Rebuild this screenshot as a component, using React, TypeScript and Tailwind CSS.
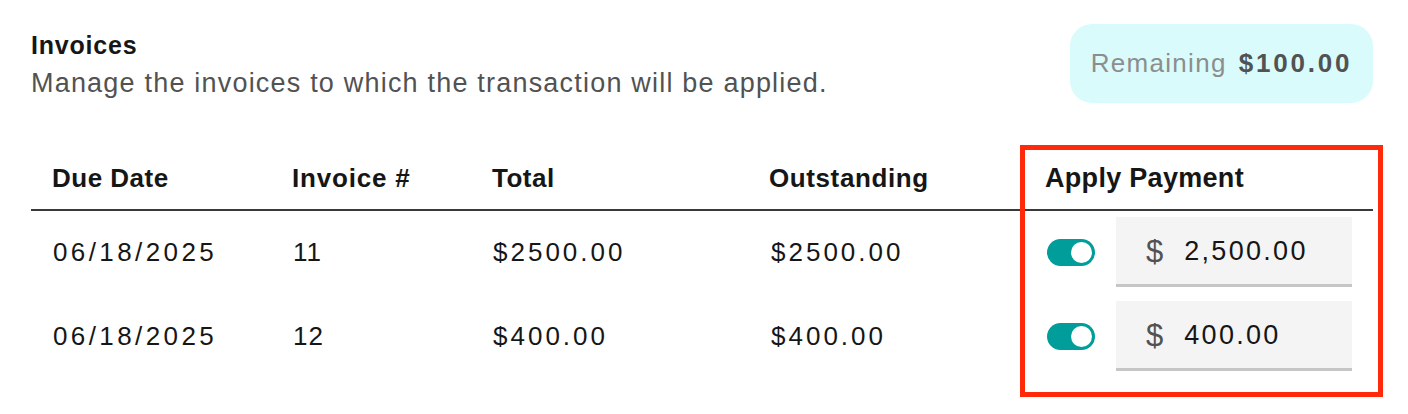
const font = { fontFamily: '"Liberation Sans", Arial, sans-serif' };

interface Invoice {
  dueDate: string;
  number: string;
  total: string;
  outstanding: string;
  applied: string;
}

const invoices: Invoice[] = [
  { dueDate: '06/18/2025', number: '11', total: '$2500.00', outstanding: '$2500.00', applied: '2,500.00' },
  { dueDate: '06/18/2025', number: '12', total: '$400.00', outstanding: '$400.00', applied: '400.00' },
];

function Toggle() {
  return (
    <div className="relative w-[48px] h-[27px] shrink-0 rounded-full bg-[#009d9a]">
      <div className="absolute right-[3px] top-[3px] w-[21px] h-[21px] rounded-full bg-white" />
    </div>
  );
}

function AmountInput({ value }: { value: string }) {
  return (
    <div className="flex items-center w-[236px] h-[70px] bg-[#f4f4f4] border-b-[3px] border-[#c6c6c6] pl-[30px]">
      <span className="text-[31px] leading-none text-[#525252] pt-[2px]">$</span>
      <span className="ml-[21px] text-[27px] leading-none tracking-[2.3px] text-[#161616] pt-[2px]">{value}</span>
    </div>
  );
}

const cols = 'grid grid-cols-[240px_200px_277px_276px_1fr]';

export default function App() {
  return (
    <div className="relative w-[1408px] h-[414px] bg-white overflow-hidden" style={font}>
      <div className="ml-[31px] w-[1342px] pt-[24px]">
        <div className="flex items-start justify-between">
          <div className="pt-[9px]">
            <h2 className="text-[25px] leading-[25px] font-bold tracking-[0.8px] text-[#161616]">Invoices</h2>
            <p className="mt-[12px] text-[27px] leading-[27px] tracking-[1.2px] text-[#525252]">
              Manage the invoices to which the transaction will be applied.
            </p>
          </div>
          <div className="flex items-center justify-center gap-[12px] w-[303px] h-[79px] rounded-[22px] bg-[#d9fbfb]">
            <span className="text-[26px] tracking-[1.3px] text-[#8d8d8d]">Remaining</span>
            <span className="text-[26px] font-bold tracking-[2.8px] text-[#525252]">$100.00</span>
          </div>
        </div>

        <div className={`${cols} items-end pt-[62px] pb-[18px] border-b-2 border-[#393939] text-[#161616] font-bold`}>
          <div className="pl-[21px] text-[26px] leading-[26px] tracking-[0.5px]">Due Date</div>
          <div className="pl-[21px] text-[26px] leading-[26px] tracking-[0.8px]">Invoice #</div>
          <div className="pl-[21px] text-[26px] leading-[26px] tracking-[0.5px]">Total</div>
          <div className="pl-[21px] text-[26px] leading-[26px] tracking-[0.6px]">Outstanding</div>
          <div className="pl-[21px] text-[27px] leading-[26px] tracking-[0.3px]">Apply Payment</div>
        </div>

        <div className="flex flex-col gap-[14px] pt-[6px]">
          {invoices.map((inv) => (
            <div key={inv.number} className={`${cols} items-center h-[70px] text-[26px] text-[#161616]`}>
              <div className="pl-[22px] tracking-[3.4px]">{inv.dueDate}</div>
              <div className="pl-[22px] tracking-[1px]">{inv.number}</div>
              <div className="pl-[22px] tracking-[3px]">{inv.total}</div>
              <div className="pl-[23px] tracking-[3px]">{inv.outstanding}</div>
              <div className="flex items-center gap-[21px] pl-[23px]">
                <Toggle />
                <AmountInput value={inv.applied} />
              </div>
            </div>
          ))}
        </div>
      </div>

      <div className="absolute left-[1020px] top-[145px] w-[363px] h-[252px] border-[5px] border-[#ff2a0a] pointer-events-none" />
    </div>
  );
}
